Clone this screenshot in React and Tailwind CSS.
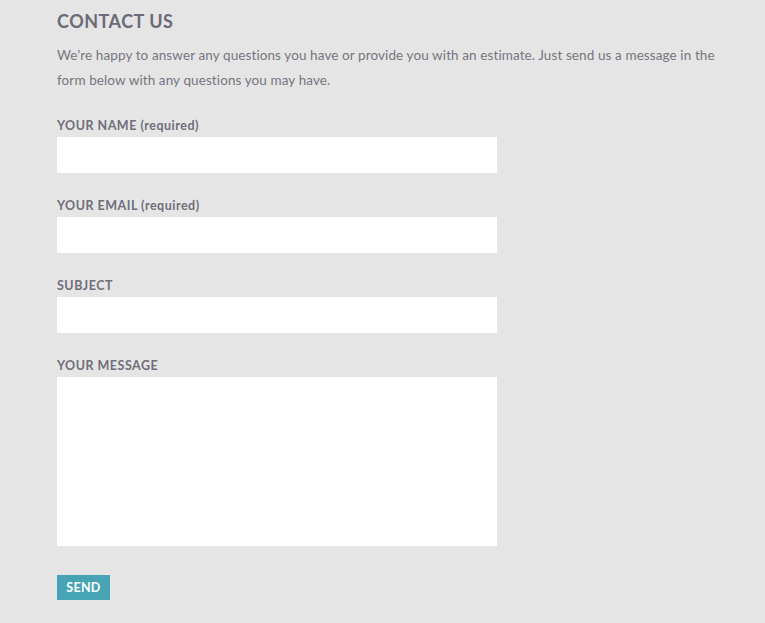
export default function App() {
  const fields = [
    { label: "YOUR NAME", req: true },
    { label: "YOUR EMAIL", req: true },
    { label: "SUBJECT", req: false },
  ];

  return (
    <div className="min-h-[623px] bg-[#e5e5e5] text-[#6f6e7a] font-['Lato',sans-serif]">
      <div className="pl-[57px] pt-[10px]">
        <h1 className="text-[18px] leading-[22px] font-bold tracking-[0.5px] text-[#6b6a76]">CONTACT US</h1>
        <p className="mt-[11px] w-[680px] text-[13.5px] leading-[25px] tracking-[0.1px] text-[#76757f]">
          We’re happy to answer any questions you have or provide you with an estimate. Just send us a message in the form below with any questions you may have.
        </p>

        <form className="mt-[25px] w-[440px]">
          {fields.map((f) => (
            <div key={f.label} className="mb-[25px]">
              <label className="block text-[12.5px] leading-[16px] font-bold tracking-[0.5px] mb-[3px]">
                {f.label}
                {f.req && <span> (required)</span>}
              </label>
              <input type="text" className="block w-full h-[36px] bg-white outline-none" />
            </div>
          ))}
          <div>
            <label className="block text-[12.5px] leading-[16px] font-bold tracking-[0.5px] mb-[3px]">YOUR MESSAGE</label>
            <textarea className="block w-full h-[169px] bg-white outline-none resize-none" />
          </div>
          <button
            type="button"
            className="mt-[29px] w-[53px] h-[25px] pt-[2px] bg-[#46a4b4] text-white text-[12.5px] font-bold tracking-[0.3px]"
          >
            SEND
          </button>
        </form>
      </div>
    </div>
  );
}
